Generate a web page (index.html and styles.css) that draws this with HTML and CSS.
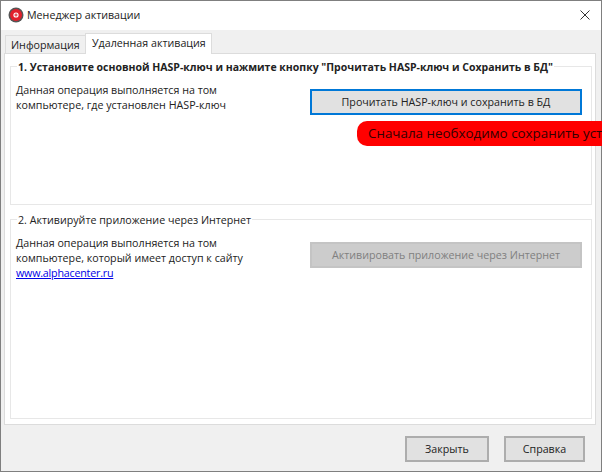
FILE: index.html
```html
<!DOCTYPE html>
<html lang="ru">
<head>
<meta charset="utf-8">
<title>Менеджер активации</title>
<link rel="stylesheet" href="styles.css">
</head>
<body>
<div class="window">
  <header class="titlebar">
    <svg class="app-icon" width="16" height="16" viewBox="0 0 16 16"><circle cx="8" cy="8" r="7.5" fill="#555"/><circle cx="8" cy="8" r="6" fill="#e2202c"/><circle cx="8" cy="8" r="2.6" fill="#fff"/><path d="M8 6.400v3.200M6.400 8h3.200" stroke="#e2202c" stroke-width="1"/></svg>
    <span class="title">Менеджер активации</span>
    <svg class="close" width="10" height="10" viewBox="0 0 10 10"><path d="M.5.5l9 9M9.500.5l-9 9" stroke="#333" stroke-width="1" fill="none"/></svg>
  </header>
  <main class="body">
    <div class="tabs">
      <div class="tab">Информация</div>
      <div class="tab active">Удаленная активация</div>
    </div>
    <div class="panel">
      <fieldset class="group group-first">
        <legend class="bold">1. Установите основной HASP-ключ и нажмите кнопку "Прочитать HASP-ключ и Сохранить в БД"</legend>
        <div class="row">
          <p class="desc">Данная операция выполняется на том<br>компьютере, где установлен HASP-ключ</p>
          <button class="btn btn-wide focused">Прочитать HASP-ключ и сохранить в БД</button>
        </div>
        <div class="toast">Сначала необходимо сохранить уст</div>
      </fieldset>
      <fieldset class="group group-second">
        <legend>2. Активируйте приложение через Интернет</legend>
        <div class="row">
          <p class="desc">Данная операция выполняется на том<br>компьютере, который имеет доступ к сайту<br><a href="#">www.alphacenter.ru</a></p>
          <button class="btn btn-wide disabled">Активировать приложение через Интернет</button>
        </div>
      </fieldset>
    </div>
    <div class="footer">
      <button class="btn btn-close">Закрыть</button>
      <button class="btn btn-help">Справка</button>
    </div>
  </main>
</div>
</body>
</html>
```
FILE: styles.css
```css
* { box-sizing: border-box; }
html, body { margin: 0; padding: 0; }
body { width: 602px; height: 472px; overflow: hidden; font-family: "Open Sans", Roboto, sans-serif; font-size: 10.7px; color: #222; }
.window { width: 602px; height: 472px; border: 1px solid #7f7f7f; display: flex; flex-direction: column; background: #f0f0f0; }
.titlebar { height: 29px; flex: none; background: #fff; display: flex; align-items: center; padding: 0 11px 1px 7px; }
.app-icon { flex: none; }
.title { margin-left: 3px; flex: 1; }
.body { flex: 1; display: flex; flex-direction: column; padding: 0 5px 0 3px; min-height: 0; }
.tabs { display: flex; height: 23px; flex: none; align-items: flex-end; padding-left: 1px; }
.tab { height: 18px; width: 81px; padding: 2px 0 0 5px; background: #f0f0f0; border: 1px solid #dcdcdc; border-bottom: 0; }
.tab.active { height: 21px; width: 127px; background: #fff; margin: 0 0 -1px -1px; padding: 2px 0 0 6px; position: relative; z-index: 1; }
.panel { height: 372px; flex: none; background: #fff; border: 1px solid #dcdcdc; padding: 4px 3px 5px 5px; display: flex; flex-direction: column; gap: 6px; }
.group { margin: 0; padding: 0 9px 0 5px; border: 1px solid #e7e7e7; position: relative; min-width: 0; }
.group-first { height: 147px; }
.group-second { flex: 1; }
legend { padding: 0 1px; margin-left: 1px; height: 16px; line-height: 18px; }
legend.bold { font-weight: 700; font-size: 10.5px; }
.row { display: flex; justify-content: space-between; align-items: flex-start; padding-top: 9px; }
.desc { margin: 0; line-height: 15px; }
a { color: #0000e6; letter-spacing: -0.2px; }
.btn { font: inherit; color: #222; background: #e1e1e1; border: 2px solid #adadad; padding: 0; }
.btn-wide { width: 272px; height: 26px; margin-top: 6px; }
.focused { border-color: #0078d7; box-shadow: inset 0 0 0 1px #e1e1e1; }
.disabled { background: #ccc; border-color: #c4c4c4; color: #808080; }
.toast { position: absolute; left: 346px; top: 47px; width: 245px; height: 25px; background: #f00; color: #300; border-radius: 10px 0 0 10px; font-size: 13.4px; line-height: 25px; padding-left: 11px; white-space: nowrap; overflow: hidden; }
.footer { flex: 1; display: flex; justify-content: flex-end; align-items: flex-start; gap: 15px; padding: 11px 11px 0 0; }
.btn-close { width: 84px; height: 26px; }
.btn-help { width: 81px; height: 26px; }
```
